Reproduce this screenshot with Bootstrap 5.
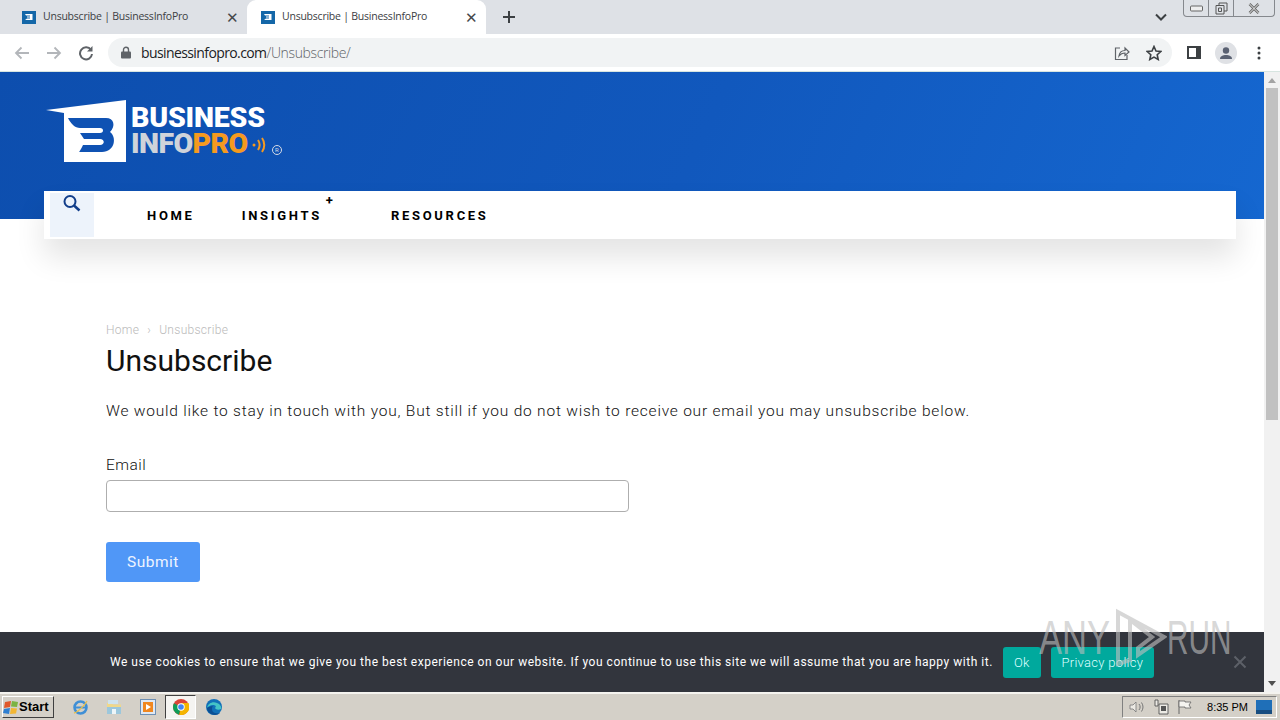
<!DOCTYPE html>
<html lang="en">
  <head>
    <meta charset="UTF-8" />
    <title>Unsubscribe | BusinessInfoPro</title>
    <link href="https://cdn.jsdelivr.net/npm/bootstrap@5.3.3/dist/css/bootstrap.min.css" rel="stylesheet" />
    <style>
      html, body { height: 720px; overflow: hidden; }
      body { font-family: "Roboto", "Liberation Sans", sans-serif; color: #222; background: #fff; }
      svg { display: block; flex: none; }

      /* browser chrome */
      .tab-strip { height: 34px; background: #dee1e6; font-family: "Open Sans", sans-serif; font-size: 10.5px; color: #3c4043; padding-left: 8px; }
      .tab-item { width: 239px; height: 34px; padding: 0 8px 0 14px; letter-spacing: -.23px; }
      .tab-item.on { background: #fff; border-radius: 9px 9px 0 0; color: #3c4043; }
      .tab-ico { margin-right: 7px; }
      .tab-x { font-size: 15px; line-height: 1; color: #45484c; }
      .tab-plus { margin-left: 16px; }
      .win-caret { margin-left: auto; margin-right: 16px; }
      .win-btns { width: 92px; height: 17px; margin: 0 5px 17px 0; border: 1px solid #85888d; border-top: 0; border-radius: 0 0 4px 4px; }
      .win-btns > div { height: 100%; border-right: 1px solid #85888d; }
      .tool-bar { height: 38px; background: #fff; border-bottom: 1px solid #d7e5e0; padding-left: 14px; }
      .url-pill { width: 1064px; height: 29px; margin-left: 14px; background: #f1f3f4; border-radius: 15px; padding: 0 10px 0 13px; font-family: "Open Sans", sans-serif; font-size: 14px; letter-spacing: -.6px; color: #202124; }
      .lock-ico { margin-right: 10px; }
      .url-path { color: #5f6368; font-weight: 300; letter-spacing: -.37px; }

      /* page */
      .page-shell { height: 620px; position: relative; }
      .page-main { width: 1264px; position: relative; overflow: hidden; }
      .hero-wrap { background: linear-gradient(115deg, #0d4eae 0%, #1158bd 55%, #1567d0 100%) no-repeat; background-size: 100% 147px; }
      .hero-top { height: 119px; padding: 28px 0 0 46px; }
      .logo-wrap { width: 240px; height: 64px; }
      .logo-words { margin-left: 5px; font-family: "Roboto", sans-serif; font-weight: 900; line-height: 1; }
      .logo-one { color: #fff; font-size: 28.5px; letter-spacing: -.2px; margin-top: 5px; line-height: 25px; }
      .logo-two { color: #cfd3da; font-size: 28.5px; letter-spacing: -.6px; margin-top: 1px; line-height: 26px; }
      .logo-two span { color: #f59a1f; }
      .logo-sig { margin: 36px 0 0 -14px; }
      .logo-reg { width: 10px; height: 10px; border: 1px solid #d5dbe6; border-radius: 50%; font-size: 6px; line-height: 8px; text-align: center; color: #d5dbe6; font-weight: 400; margin: 45px 0 0 3px; }
      .nav-band { padding: 0 28px 0 44px; }
      .nav-box { height: 48px; background: #fff; box-shadow: 0 18px 30px rgba(0,0,0,.11); }
      .search-cell { width: 44px; height: 44px; margin: 2px 0 0 6px; background: #edf3fb; padding: 1px 0 0 12px; }
      .menu-item { color: #000; font-size: 13px; font-weight: 700; letter-spacing: 2.7px; text-decoration: none; line-height: 1; margin-top: 18px; }
      .menu-plus { font-size: 13px; font-weight: 700; line-height: 1; color: #000; margin: 3px 0 0 4px; }
      .content-area { padding: 83px 0 0 106px; }
      .crumbs { margin: 0; font-size: 12px; line-height: 16px; letter-spacing: .3px; --bs-breadcrumb-divider: "›"; --bs-breadcrumb-item-padding-x: 8px; --bs-breadcrumb-margin-bottom: 0; font-weight: 300; }
      .crumbs a, .crumbs .breadcrumb-item, .crumbs .breadcrumb-item::before { color: #b9b9b9 !important; text-decoration: none; }
      .page-title { font-size: 30px; font-weight: 400; color: #111; line-height: 36px; margin: 5px 0 20px; }
      .intro-text { font-size: 15.5px; font-weight: 300; line-height: 24px; letter-spacing: .785px; color: #111; margin: 1px 0 30px; }
      .mail-label { font-size: 15.5px; font-weight: 300; letter-spacing: .5px; line-height: 24px; margin: 0 0 3px; color: #111; display: block; }
      .mail-input { width: 523px; height: 32px; border: 1px solid #aeaeae; border-radius: 4px; }
      .send-btn { width: 94px; height: 40px; margin-top: 30px; padding-top: 8px; background: #5097f7; border: 0; border-radius: 3px; color: #eef4ff; font-size: 15.5px; letter-spacing: .5px; }

      /* cookie notice over the page */
      .cookie-bar { position: absolute; left: 0; right: 0; bottom: 0; height: 60px; background: #32353d; color: #fff; font-size: 12px; letter-spacing: .52px; padding-left: 110px; white-space: nowrap; }
      .cookie-btn { height: 31px; background: #00a99d; color: #dff; border-radius: 3px; font-size: 13px; letter-spacing: .3px; padding: 0; line-height: 31px; text-align: center; border: 0; font-weight: 300; }
      .cookie-close { position: absolute; left: 1233px; top: 23px; }
      .run-mark { position: absolute; left: 1039px; top: 535px; display: flex; align-items: center; color: rgba(190,190,190,.62); font-size: 48px; font-family: "Liberation Sans", sans-serif; line-height: 1; }
      .run-mark span { display: inline-block; transform-origin: left center; }
      .run-any { width: 76px; transform: scaleX(.72); }
      .run-run { width: 62px; transform: scaleX(.62); }

      .scroll-rail { width: 16px; background: #f1f1f1; position: relative; }
      .scroll-thumb { position: absolute; left: 2px; top: 16px; width: 12px; height: 332px; background: #c1c1c1; }
      .scroll-up, .scroll-down { position: absolute; left: 4px; width: 0; height: 0; border-left: 4px solid transparent; border-right: 4px solid transparent; }
      .scroll-up { top: 6px; border-bottom: 5px solid #a3a3a3; }
      .scroll-down { bottom: 6px; border-top: 5px solid #505050; }

      /* windows taskbar */
      .task-bar { height: 28px; background: #d4d0c8; border-top: 2px solid #f4f3ef; padding-left: 2px; }
      .start-btn { width: 52px; height: 22px; background: #d4d0c8; border: 1px solid; border-color: #fff #404040 #404040 #fff; font-family: "Liberation Sans", sans-serif; font-weight: 700; font-size: 13px; color: #000; padding-left: 0; }
      .task-icon { width: 34px; height: 26px; }
      .task-icon.active { background: #f5f4f1; border: 1px solid; border-color: #404040 #fff #fff #404040; width: 31px; height: 24px; margin-right: 1px; }
      .sys-tray { width: 155px; height: 22px; margin-left: auto; margin-right: 3px; border: 1px solid; border-color: #808080 #fff #fff #808080; font-family: "Liberation Sans", sans-serif; font-size: 11px; color: #000; padding: 0 4px 0 6px; }
    </style>
  </head>
  <body class="d-flex flex-column">
    <!-- tabs -->
    <div class="tab-strip d-flex align-items-center">
      <div class="tab-item d-flex align-items-center">
        <svg class="tab-ico" width="14" height="14" viewBox="0 0 14 14"><rect width="14" height="13" y="1" fill="#1467a8"/><path d="M3 4h7.500v6H3l2-1.500h3v-1H5v-1h3v-1H4z" fill="#fff"/></svg>
        <span>Unsubscribe | BusinessInfoPro</span>
        <span class="tab-x ms-auto">✕</span>
      </div>
      <div class="tab-item on d-flex align-items-center">
        <svg class="tab-ico" width="14" height="14" viewBox="0 0 14 14"><rect width="14" height="13" y="1" fill="#1467a8"/><path d="M3 4h7.500v6H3l2-1.500h3v-1H5v-1h3v-1H4z" fill="#fff"/></svg>
        <span>Unsubscribe | BusinessInfoPro</span>
        <span class="tab-x ms-auto">✕</span>
      </div>
      <svg class="tab-plus" width="14" height="14" viewBox="0 0 14 14"><path d="M7 1v12M1 7h12" stroke="#3c4043" stroke-width="2"/></svg>
      <svg class="win-caret" width="12" height="8" viewBox="0 0 12 8"><path d="M1 1.500l5 5 5-5" fill="none" stroke="#3c4043" stroke-width="2"/></svg>
      <div class="win-btns d-flex">
        <div class="d-flex align-items-center justify-content-center" style="width:25px"><svg width="13" height="7" viewBox="0 0 13 7"><rect x=".5" y="1" width="12" height="5" rx="1" fill="#eee" stroke="#666"/></svg></div>
        <div class="d-flex align-items-center justify-content-center" style="width:25px"><svg width="13" height="13" viewBox="0 0 13 13"><path d="M4 3V1h8v8h-3M1 3.500h8v8.500H1zM3.500 6h3v3.500h-3z" fill="none" stroke="#555"/></svg></div>
        <div class="d-flex align-items-center justify-content-center flex-fill border-0"><svg width="12" height="11" viewBox="0 0 12 11"><path d="M1.500 1l9 9M10.500 1l-9 9" stroke="#666" stroke-width="2.500"/><path d="M1.500 1l9 9M10.500 1l-9 9" stroke="#eee" stroke-width="1"/></svg></div>
      </div>
    </div>
    <!-- address bar -->
    <div class="tool-bar d-flex align-items-center">
      <svg width="16" height="14" viewBox="0 0 16 14"><path d="M15 7H2M7.500 1.500L2 7l5.500 5.500" fill="none" stroke="#b3b6ba" stroke-width="1.800"/></svg>
      <svg class="ms-3" width="16" height="14" viewBox="0 0 16 14"><path d="M1 7h13M8.500 1.500L14 7l-5.500 5.500" fill="none" stroke="#b3b6ba" stroke-width="1.800"/></svg>
      <svg class="ms-3" width="16" height="16" viewBox="0 0 16 16"><path d="M13 5A6 6 0 1 0 14 9" fill="none" stroke="#5f6368" stroke-width="2"/><path d="M14.500 1v5.500H9z" fill="#5f6368"/></svg>
      <div class="url-pill d-flex align-items-center">
        <svg class="lock-ico" width="10" height="13" viewBox="0 0 10 13"><path d="M2.500 6V3.800a2.500 2.500 0 0 1 5 0V6" fill="none" stroke="#5f6368" stroke-width="1.400"/><rect y="5.500" width="10" height="7" rx="1" fill="#5f6368"/></svg>
        <span>businessinfopro.com<span class="url-path">/Unsubscribe/</span></span>
        <svg class="ms-auto" width="16" height="16" viewBox="0 0 16 16"><path d="M6 3H1.500v11.500H13V10" fill="none" stroke="#5f6368" stroke-width="1.200"/><path d="M5 11c.5-4 3-5.500 6-5.500V3l4 4-4 3.500V8c-2.500 0-4.500 1-6 3z" fill="none" stroke="#5f6368" stroke-width="1.200"/></svg>
        <svg class="ms-3" width="16" height="16" viewBox="0 0 16 16"><path d="M8 1.500l2 4.500 4.800.5-3.600 3.200 1 4.800L8 12.100l-4.200 2.400 1-4.800L1.200 6.500 6 6z" fill="none" stroke="#3c4043" stroke-width="1.600"/></svg>
      </div>
      <svg width="14" height="13" viewBox="0 0 14 13" style="margin-left:15px"><rect x="1" y="1" width="12" height="11" fill="none" stroke="#3c4043" stroke-width="2"/><rect x="9" y="1" width="4" height="11" fill="#3c4043"/></svg>
      <svg width="22" height="22" viewBox="0 0 22 22" style="margin-left:14px"><circle cx="11" cy="11" r="11" fill="#dfe1e5"/><circle cx="11" cy="8.500" r="3.200" fill="#5a6172"/><path d="M5 17c0-3 3-4 6-4s6 1 6 4z" fill="#5a6172"/></svg>
      <svg width="4" height="14" viewBox="0 0 4 14" style="margin-left:20px"><circle cx="2" cy="2" r="1.500" fill="#3c4043"/><circle cx="2" cy="7" r="1.500" fill="#3c4043"/><circle cx="2" cy="12" r="1.500" fill="#3c4043"/></svg>
    </div>

    <div class="page-shell d-flex">
      <div class="page-main">
        <div class="hero-wrap">
          <header class="hero-top">
            <div class="logo-wrap d-flex">
              <svg width="80" height="62" viewBox="0 0 80 62"><path d="M0 10L80 0v62H18V13z" fill="#fff"/><path transform="translate(2 2)" d="M20 16h38c8 0 10 8 4 14 7 5 5 20-8 20H32c-2 0 0 0 3-7h17c5 0 5-6 0-6H36l-4-6h20c4 0 4-5 0-5H32c-5 0-9-4-12-10z" fill="#0f52b3"/></svg>
              <div class="logo-words">
                <div class="logo-one">BUSINESS</div>
                <div class="logo-two">INFO<span>PRO</span></div>
              </div>
              <svg class="logo-sig" width="18" height="18" viewBox="0 0 18 18"><circle cx="3" cy="9" r="1.500" fill="#f59a1f"/><path d="M7 4c2 3 2 7 0 10M11 2c3 4 3 10 0 14" fill="none" stroke="#f59a1f" stroke-width="2"/></svg>
              <div class="logo-reg">R</div>
            </div>
          </header>
          <div class="nav-band">
            <nav class="nav-box d-flex">
              <div class="search-cell">
                <svg width="20" height="20" viewBox="0 0 20 20"><circle cx="8" cy="7.500" r="5.500" fill="none" stroke="#123e8a" stroke-width="2"/><path d="M12 11.500l5.500 5" stroke="#123e8a" stroke-width="2.500"/></svg>
              </div>
              <a class="menu-item" href="#" style="margin-left:53px">HOME</a>
              <a class="menu-item" href="#" style="margin-left:47px">INSIGHTS</a>
              <span class="menu-plus">+</span>
              <a class="menu-item" href="#" style="margin-left:58px">RESOURCES</a>
            </nav>
          </div>
        </div>
        <main class="content-area">
          <ol class="breadcrumb crumbs">
            <li class="breadcrumb-item"><a href="#">Home</a></li>
            <li class="breadcrumb-item active">Unsubscribe</li>
          </ol>
          <h1 class="page-title">Unsubscribe</h1>
          <p class="intro-text">We would like to stay in touch with you, But still if you do not wish to receive our email you may unsubscribe below.</p>
          <form>
            <label class="mail-label" for="mail">Email</label>
            <input id="mail" type="email" class="form-control mail-input" />
            <button type="button" class="btn send-btn d-block">Submit</button>
          </form>
        </main>
        <div class="cookie-bar d-flex align-items-center">
          <span>We use cookies to ensure that we give you the best experience on our website. If you continue to use this site we will assume that you are happy with it.</span>
          <button class="cookie-btn" style="width:38px;margin-left:10px">Ok</button>
          <button class="cookie-btn" style="width:103px;margin-left:10px">Privacy policy</button>
          <svg class="cookie-close" width="14" height="14" viewBox="0 0 14 14"><path d="M1.500 1.500l11 11M12.500 1.500l-11 11" stroke="#5d6068" stroke-width="2"/></svg>
        </div>
        <div class="run-mark">
          <span class="run-any">ANY</span>
          <svg width="52" height="62" viewBox="0 0 52 62"><path d="M3 5l0 52 12-4V13l22 17-14 11v7l26-18z" fill="none" stroke="rgba(190,190,190,.62)" stroke-width="4"/></svg>
          <span class="run-run">RUN</span>
        </div>
      </div>
      <div class="scroll-rail flex-fill">
        <div class="scroll-up"></div>
        <div class="scroll-thumb"></div>
        <div class="scroll-down"></div>
      </div>
    </div>

    <!-- windows taskbar -->
    <div class="task-bar d-flex align-items-center">
      <div class="start-btn d-flex align-items-center">
        <svg width="16" height="15" viewBox="0 0 16 15"><path d="M2 2l6-1-1 6-6 1z" fill="#e0572a"/><path d="M9 1l6 1-1 5-6-.500z" fill="#7cb342"/><path d="M1 9l6-1-1 6-6-1z" fill="#2f7fd1"/><path d="M8 8l6 .500-1 5-6 .500z" fill="#f2b632"/></svg>
        <span>Start</span>
      </div>
      <div class="d-flex align-items-center" style="margin-left:9px">
        <div class="task-icon d-flex align-items-center justify-content-center"><svg width="17" height="17" viewBox="0 0 17 17"><circle cx="8.500" cy="8.500" r="6" fill="none" stroke="#3f8fd6" stroke-width="2.500"/><path d="M3 8.500h12" stroke="#3f8fd6" stroke-width="2"/><path d="M2 14C6 13 13 6 15 2" fill="none" stroke="#e9c04c" stroke-width="1.300"/></svg></div>
        <div class="task-icon d-flex align-items-center justify-content-center"><svg width="16" height="16" viewBox="0 0 16 16"><path d="M1 4h5l1 1.500h8V15H1z" fill="#f0d88a"/><path d="M2 1h10v4H2z" fill="#cfe3ee"/><path d="M1 8h14v7H1z" fill="#9cc7dc"/><path d="M6 10h4v5H6z" fill="#eef5f8"/></svg></div>
        <div class="task-icon d-flex align-items-center justify-content-center"><svg width="16" height="16" viewBox="0 0 16 16"><rect x=".5" y=".5" width="15" height="15" fill="#dfe8f3" stroke="#6d8fb3"/><rect x="3" y="3" width="10" height="10" fill="#f0871f"/><path d="M6 5l5 3-5 3z" fill="#fff"/></svg></div>
        <div class="task-icon active d-flex align-items-center justify-content-center"><svg width="16" height="16" viewBox="0 0 16 16"><circle cx="8" cy="8" r="8" fill="#db4437"/><path d="M8 8L1 4.200A8 8 0 0 0 6 15.700z" fill="#0f9d58"/><path d="M8 4h7.400a8 8 0 0 1-9 11.700L8 8z" fill="#f4b400"/><circle cx="8" cy="8" r="3.700" fill="#fff"/><circle cx="8" cy="8" r="2.800" fill="#4285f4"/></svg></div>
        <div class="task-icon d-flex align-items-center justify-content-center"><svg width="16" height="16" viewBox="0 0 16 16"><circle cx="8" cy="8" r="8" fill="#1170b8"/><path d="M1 9c1-5 6-7 10-5 3 1 5 4 4 6-2 1-5 1-6-1 2-2 0-3-2-3-3 0-5 2-6 3z" fill="#44c4c6"/><path d="M1 9c0 4 4 7 8 7 2 0 4-1 5-2-4 1-8 0-8-4 0-1 0-2 1-3-3 0-5 1-6 2z" fill="#0b4f94"/></svg></div>
      </div>
      <div class="sys-tray d-flex align-items-center">
        <svg width="16" height="16" viewBox="0 0 16 16"><path d="M1 6h3l3-3v10l-3-3H1z" fill="#eceae4" stroke="#777" stroke-width=".8"/><path d="M10 5c1.500 2 1.500 4 0 6M12.500 3.500c2 3 2 6 0 9" fill="none" stroke="#777"/></svg>
        <svg class="ms-2" width="16" height="16" viewBox="0 0 16 16"><path d="M2 1h3v6H2zM6 5h9v10H6z" fill="#eceae4" stroke="#555" stroke-width=".9"/><path d="M8 7h5v5H8z" fill="#555"/></svg>
        <svg class="ms-2" width="16" height="16" viewBox="0 0 16 16"><path d="M2 1v14" stroke="#666"/><path d="M2 2h6v1h6l-2 3 2 3H8V8H2z" fill="#f5f4f0" stroke="#666" stroke-width=".8"/></svg>
        <span class="ms-auto" style="margin-top:1px">8:35 PM</span>
        <svg class="ms-2" width="16" height="14" viewBox="0 0 16 14"><rect width="16" height="14" fill="#1f6fb8"/><rect y="10" width="16" height="4" fill="#184d80"/></svg>
      </div>
    </div>
  </body>
</html>
